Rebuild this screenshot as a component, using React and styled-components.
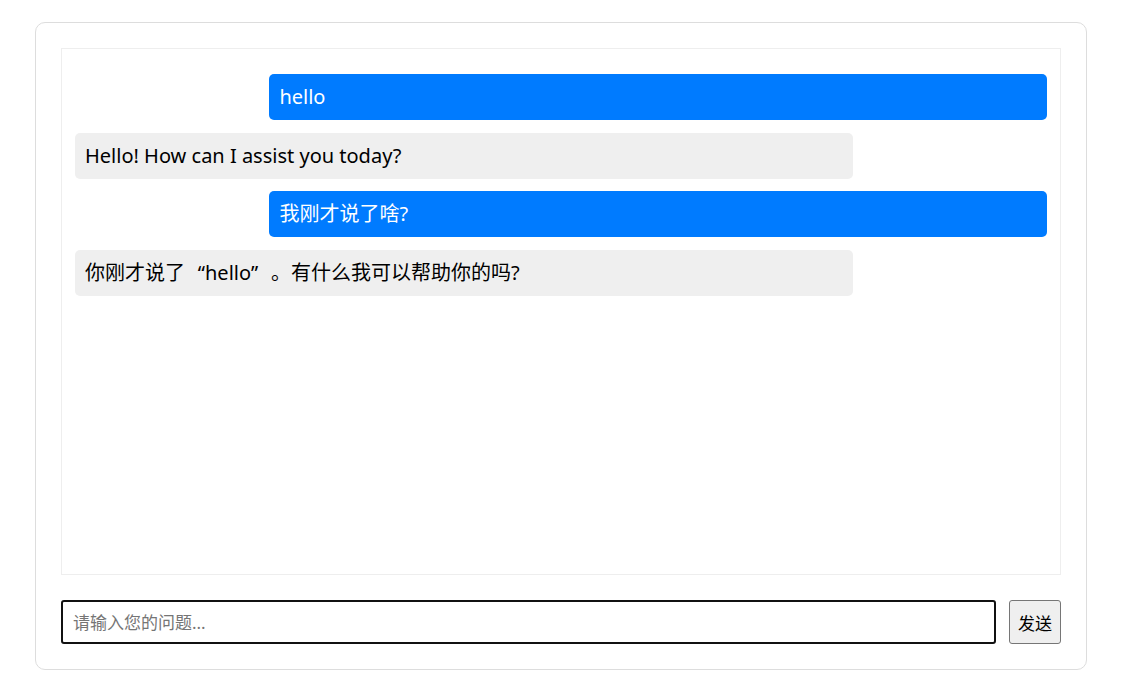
import React, { useState } from 'react';
import styled, { createGlobalStyle } from 'styled-components';

const GlobalStyle = createGlobalStyle`
  body {
    margin: 0;
    background: #fff;
    font-family: "Noto Sans", "Noto Sans CJK SC", sans-serif;
  }
`;

const Card = styled.div`
  width: 1000px;
  margin: 22px auto 0;
  padding: 25px;
  border: 1px solid #ddd;
  border-radius: 10px;
`;

const ChatBox = styled.div`
  height: 500px;
  padding: 12.5px 13px;
  border: 1px solid #eee;
  overflow-y: auto;
`;

const Bubble = styled.div`
  width: 80%;
  margin: 12.5px 0 12.5px ${(p) => (p.$user ? 'auto' : '0')};
  padding: 10px;
  box-sizing: border-box;
  border-radius: 5px;
  background: ${(p) => (p.$user ? '#007bff' : '#efefef')};
  color: ${(p) => (p.$user ? '#fff' : '#000')};
  font-size: 20px;
  line-height: 26px;
`;

// full-width CJK quote marks, like the original font draws them
const Quote = styled.span`
  display: inline-block;
  width: 1em;
  text-align: ${(p) => (p.$open ? 'right' : 'left')};
`;

const InputRow = styled.form`
  display: flex;
  gap: 13px;
  margin-top: 25px;
`;

const TextInput = styled.input`
  flex: 1;
  height: 44px;
  box-sizing: border-box;
  padding: 0 10px;
  border: 2px solid #111;
  border-radius: 3px;
  font-family: "Noto Sans", "Noto Sans CJK SC", sans-serif;
  font-size: 17px;
  outline: none;
  &::placeholder {
    color: #757575;
  }
`;

const SendButton = styled.button`
  width: 52px;
  height: 44px;
  padding: 0;
  border: 1px solid #767676;
  border-radius: 3px;
  background: #efefef;
  color: #000;
  font-family: "Noto Sans CJK SC", sans-serif;
  font-size: 17px;
`;

const initial = [
  { id: 1, role: 'user', text: 'hello' },
  { id: 2, role: 'assistant', text: 'Hello! How can I assist you today?' },
  { id: 3, role: 'user', text: '我刚才说了啥?' },
  { id: 4, role: 'assistant', text: '你刚才说了“hello”。有什么我可以帮助你的吗?' },
];

const renderText = (text) =>
  text.split(/([“”])/).map((part, i) =>
    part === '“' || part === '”' ? (
      <Quote key={i} $open={part === '“'}>{part}</Quote>
    ) : (
      part
    )
  );

export default function App() {
  const [messages] = useState(initial);
  const [value, setValue] = useState('');

  return (
    <>
      <GlobalStyle />
      <Card>
        <ChatBox>
          {messages.map((m) => (
            <Bubble key={m.id} $user={m.role === 'user'}>
              {renderText(m.text)}
            </Bubble>
          ))}
        </ChatBox>
        <InputRow onSubmit={(e) => e.preventDefault()}>
          <TextInput
            value={value}
            onChange={(e) => setValue(e.target.value)}
            placeholder="请输入您的问题..."
          />
          <SendButton type="submit">发送</SendButton>
        </InputRow>
      </Card>
    </>
  );
}
